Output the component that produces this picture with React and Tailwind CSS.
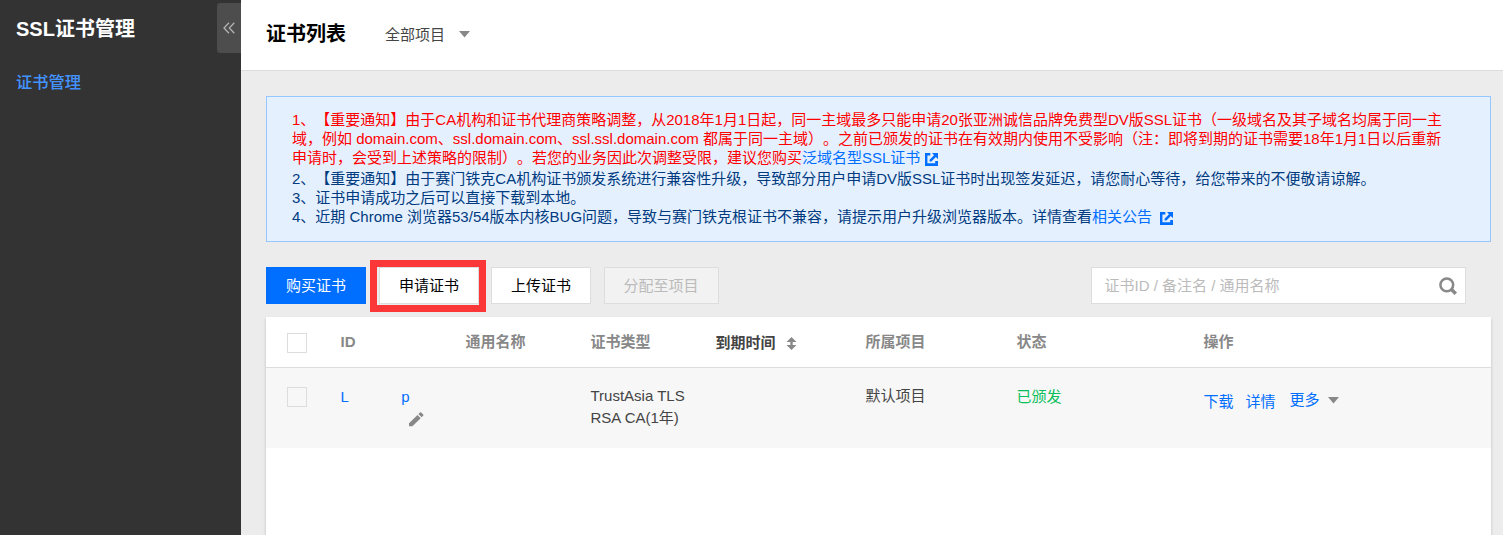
import React from "react";

function ExternalIcon({ className }) {
  return (
    <svg className={className} width="13" height="13" viewBox="0 0 13 13" fill="#006eff">
      <path d="M0 0h5.3v2.4H2.4v7.8h7.8V8H13v5H0z" />
      <path d="M7 0h6v6.2l-2.1-2.1L6.4 8.6H4.6V6.8L9 2.3z" />
    </svg>
  );
}

function Caret({ className }) {
  return (
    <svg className={className} width="11" height="7" viewBox="0 0 11 7" fill="#888888">
      <path d="M0 0h11L5.5 6.5z" />
    </svg>
  );
}

function Sidebar() {
  return (
    <aside className="flex w-[241px] shrink-0 flex-col bg-[#333333] pl-4">
      <div className="flex justify-between pt-[3px]">
        <h2 className="mt-[11px] h-[30px] text-[20px] leading-[30px] font-bold text-white">SSL证书管理</h2>
        <button className="flex h-[50px] w-6 items-center justify-center rounded-l-[3px] bg-[#4d4d4d]">
          <svg width="12" height="12" viewBox="0 0 12 12" fill="none" stroke="#b3b3b3" strokeWidth="1.3">
            <path d="M6 0.8L1 6l5 5.2M11.3 0.8L6.3 6l5 5.2" />
          </svg>
        </button>
      </div>
      <a className="mt-[17px] text-[16.25px] leading-6 font-medium text-[#4393ff]">证书管理</a>
    </aside>
  );
}

function Notice() {
  return (
    <div className="h-[146px] border border-[#97c7ff] bg-[#e5f0ff] pt-[13px] pl-[25px] leading-[19px] whitespace-nowrap text-[#003b80]">
      <div className="text-[#ff0000]">
        <p className="h-[19px]">1、【重要通知】由于CA机构和证书代理商策略调整，从2018年1月1日起，同一主域最多只能申请20张亚洲诚信品牌免费型DV版SSL证书（一级域名及其子域名均属于同一主</p>
        <p className="h-[19px]">域，例如 domain.com、ssl.domain.com、ssl.ssl.domain.com 都属于同一主域）。之前已颁发的证书在有效期内使用不受影响（注：即将到期的证书需要18年1月1日以后重新</p>
        <p className="flex h-[19px]">
          申请时，会受到上述策略的限制）。若您的业务因此次调整受限，建议您购买
          <a className="text-[#006eff]">泛域名型SSL证书</a>
          <ExternalIcon className="mt-[5px] ml-[5px]" />
        </p>
      </div>
      <p className="mt-[2px] h-[19px]">2、【重要通知】由于赛门铁克CA机构证书颁发系统进行兼容性升级，导致部分用户申请DV版SSL证书时出现签发延迟，请您耐心等待，给您带来的不便敬请谅解。</p>
      <p className="h-[19px]">3、证书申请成功之后可以直接下载到本地。</p>
      <p className="flex h-[19px]">
        4、近期 Chrome 浏览器53/54版本内核BUG问题，导致与赛门铁克根证书不兼容，请提示用户升级浏览器版本。详情查看
        <a className="text-[#006eff]">相关公告</a>
        <ExternalIcon className="mt-[5px] ml-[8px]" />
      </p>
    </div>
  );
}

function Toolbar() {
  return (
    <div className="mt-[25px] flex h-[37px]">
      <button className="w-[100px] bg-[#006eff] pt-px text-white">购买证书</button>
      <div className="relative ml-[13px] flex">
        <button className="w-[100px] border border-[#dddddd] bg-white pt-px text-black">申请证书</button>
        <div className="absolute -top-[7px] -left-[9px] h-[52px] w-[116px] border-7 border-[#fc3737]" />
      </div>
      <button className="ml-3 w-[100px] border border-[#dddddd] bg-white pt-px text-black">上传证书</button>
      <button className="ml-[13px] w-[115px] border border-[#dddddd] bg-[#f2f2f2] pt-px pr-px text-[#bbbbbb]">分配至项目</button>
      <div className="mr-[25px] ml-auto flex w-[375px] items-center justify-between border border-[#dddddd] bg-white pr-2 pl-[12.5px]">
        <span className="pt-px text-[#bbbbbb]">证书ID / 备注名 / 通用名称</span>
        <svg width="18" height="18" viewBox="0 0 18 18" fill="none" stroke="#888888">
          <circle cx="7.8" cy="7.8" r="6.4" strokeWidth="2.5" />
          <path d="M12.2 12.2l4.6 4.6" strokeWidth="3.4" />
        </svg>
      </div>
    </div>
  );
}

const columns = "grid grid-cols-[74.5px_125px_125px_125px_150px_151px_187px_1fr]";

function Checkbox({ className }) {
  return <span className={`ml-[21px] block size-5 border border-[#dddddd] ${className}`} />;
}

function Table() {
  return (
    <section className="mt-[13px] flex-1 bg-white shadow-[0_2px_3px_rgba(0,0,0,0.2)]">
      <div className={`${columns} h-[51px] border-b border-[#dddddd] pt-[14px] leading-[22px] font-bold text-[#888888]`}>
        <Checkbox className="mt-[2px]" />
        <span>ID</span>
        <span>通用名称</span>
        <span>证书类型</span>
        <span className="flex pt-px text-[#444444]">
          到期时间
          <svg className="mt-[5px] ml-[10px]" width="11" height="13" viewBox="0 0 11 13" fill="#888888">
            <path d="M5.5 0l5 5H6.7v3h3.8l-5 5-5-5h3.8V5H0.5z" />
          </svg>
        </span>
        <span>所属项目</span>
        <span>状态</span>
        <span>操作</span>
      </div>
      <div className={`${columns} h-20 bg-[#f7f7f7] pt-[17px] leading-[22px] text-[#444444]`}>
        <Checkbox className="mt-[2px]" />
        <div className="text-[#006eff]">
          <div className="flex gap-[52.5px] pt-px">
            <a>L</a>
            <a>p</a>
          </div>
          <svg className="mt-[4px] ml-[68.5px]" width="15" height="15" viewBox="0 0 15 15" fill="#888888">
            <path d="M0 11.2L8.5 3l3.2 3.2L3.4 14.3H0zM9.4 2.1l1.6-1.6q.6-.5 1.2 0l2 2q.5.6 0 1.2l-1.6 1.6z" />
          </svg>
        </div>
        <span />
        <span>TrustAsia TLS<br />RSA CA(1年)</span>
        <span />
        <span>默认项目</span>
        <span className="pt-px text-[#0abf5b]">已颁发</span>
        <div className="flex items-start pt-[6px] text-[#006eff]">
          <a>下载</a>
          <a className="ml-3">详情</a>
          <a className="-mt-[2px] ml-[14px]">更多</a>
          <Caret className="mt-[6px] ml-2" />
        </div>
      </div>
    </section>
  );
}

export default function App() {
  return (
    <div
      lang="zh-CN"
      className="flex h-[535px] w-[1503px] overflow-hidden bg-[#ececec] font-['Liberation_Sans','Noto_Sans_CJK_SC',sans-serif] text-[15px] [text-spacing-trim:space-all]"
    >
      <Sidebar />
      <div className="flex flex-1 flex-col">
        <header className="flex h-[71px] border-b border-[#dddddd] bg-white pl-[25px]">
          <h1 className="mt-[19px] text-[20px] leading-[30px] font-bold text-black">证书列表</h1>
          <div className="mt-[24px] ml-[39px] flex h-[22px] leading-[22px] text-[#444444]">
            全部项目
            <Caret className="mt-[7px] ml-[14px]" />
          </div>
        </header>
        <main className="flex flex-1 flex-col pt-[25px] pr-3 pl-[25px]">
          <Notice />
          <Toolbar />
          <Table />
        </main>
      </div>
    </div>
  );
}
